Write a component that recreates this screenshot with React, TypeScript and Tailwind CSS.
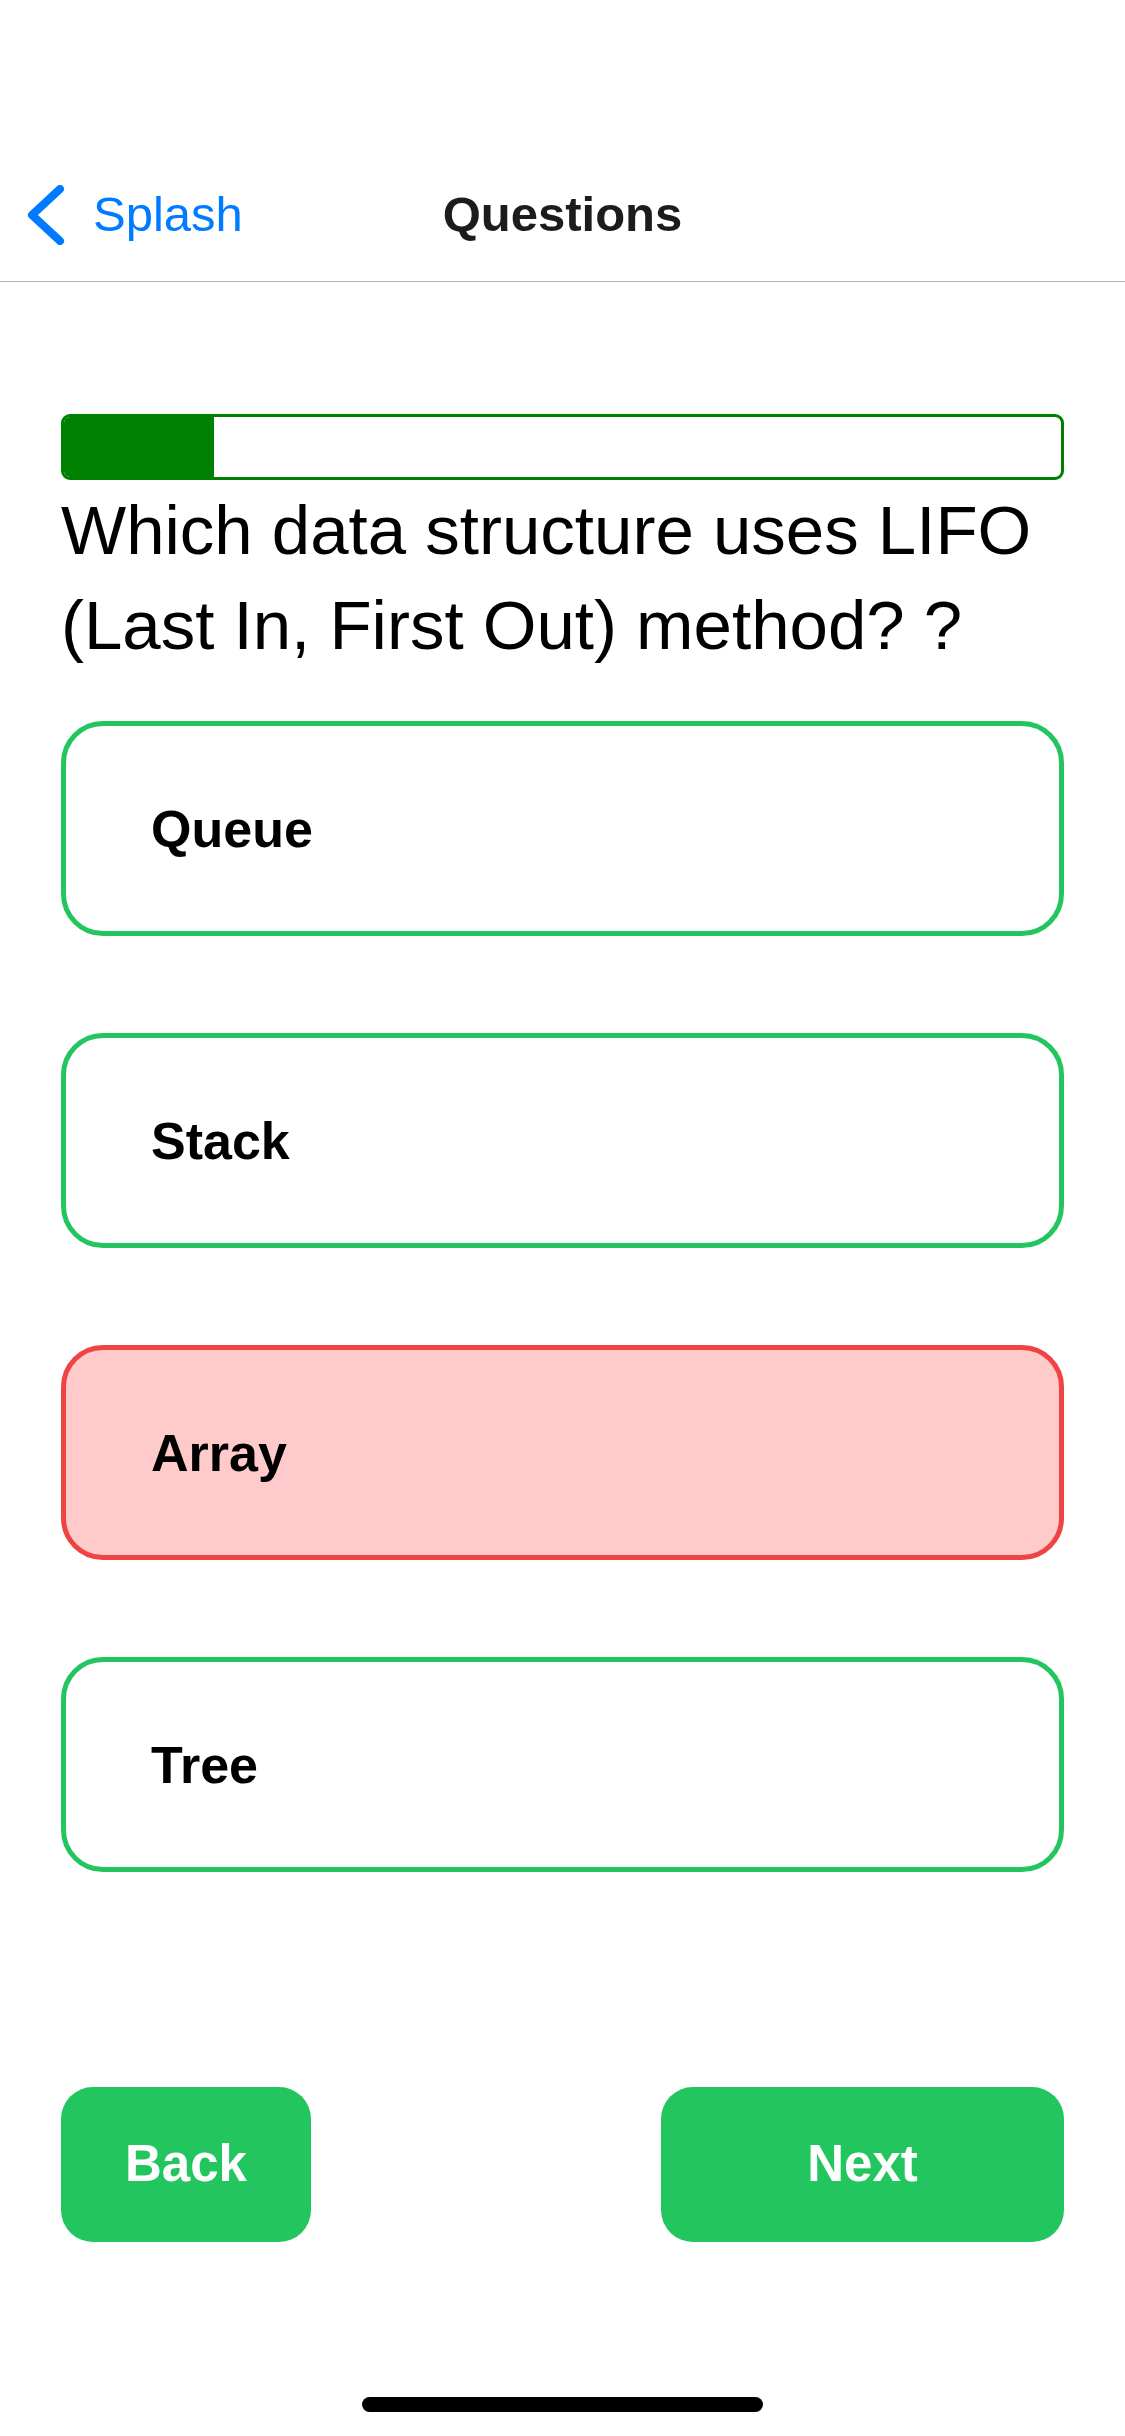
import { useState } from 'react';

const options = ['Queue', 'Stack', 'Array', 'Tree'];

export default function App() {
  const [selected, setSelected] = useState<string>('Array');

  return (
    <div className="w-[1125px] h-[2436px] bg-white flex flex-col font-['Liberation_Sans',Arial,sans-serif] text-black">
      {/* status bar space */}
      <div className="h-[148px] shrink-0" />

      {/* Navigation bar */}
      <header className="h-[134px] shrink-0 border-b border-[#b3b3b3] grid grid-cols-[1fr_auto_1fr] items-center">
        <button className="flex items-center gap-[28px] pl-[27px] text-[#007aff] text-[49px] leading-none">
          <svg width="38" height="60" viewBox="0 0 38 60" fill="none">
            <polyline
              points="33,4 5,30 33,56"
              stroke="#007aff"
              strokeWidth="8"
              strokeLinecap="round"
              strokeLinejoin="round"
            />
          </svg>
          <span>Splash</span>
        </button>
        <h1 className="text-[49px] font-bold text-[#1c1c1e] leading-none">Questions</h1>
        <div />
      </header>

      <main className="px-[61px] pt-[132px] flex flex-col">
        {/* Progress */}
        <div className="h-[66px] rounded-[9px] border-[3px] border-[#008000] overflow-hidden">
          <div className="h-full w-[15%] bg-[#008000]" />
        </div>

        <p className="mt-[3px] text-[69px] leading-[95px]">
          Which data structure uses LIFO (Last In, First Out) method? ?
        </p>

        {/* Options */}
        <div className="mt-[48px] flex flex-col gap-[97px]">
          {options.map((opt) => {
            const wrong = opt === selected;
            return (
              <button
                key={opt}
                onClick={() => setSelected(opt)}
                className={
                  wrong
                    ? 'h-[215px] rounded-[42px] border-[5px] border-[#ef4444] bg-[#fecaca] pl-[85px] flex items-center text-[52px] font-bold'
                    : 'h-[215px] rounded-[42px] border-[5px] border-[#22c55e] bg-white pl-[85px] flex items-center text-[52px] font-bold'
                }
              >
                {opt}
              </button>
            );
          })}
        </div>

        {/* Footer buttons */}
        <div className="mt-[215px] flex justify-between">
          <button className="w-[250px] h-[155px] rounded-[32px] bg-[#22c55e] text-white text-[51px] font-bold flex items-center justify-center">
            Back
          </button>
          <button className="w-[403px] h-[155px] rounded-[32px] bg-[#22c55e] text-white text-[51px] font-bold flex items-center justify-center">
            Next
          </button>
        </div>
      </main>

      {/* home indicator */}
      <div className="mt-auto mb-[24px] mx-auto w-[401px] h-[15px] rounded-full bg-black" />
    </div>
  );
}
